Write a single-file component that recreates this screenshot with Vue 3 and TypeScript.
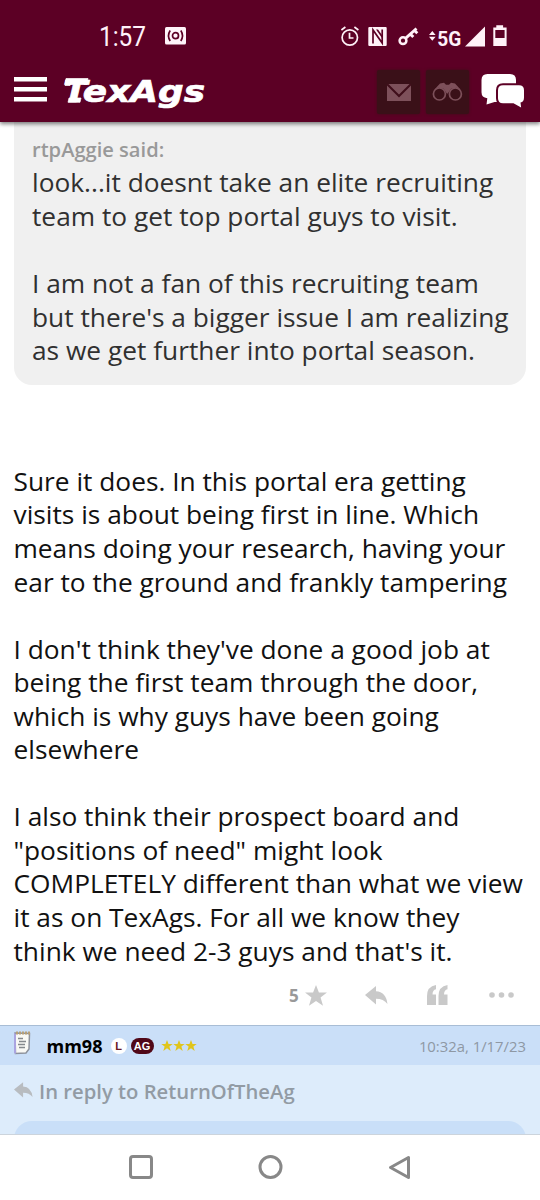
<script setup lang="ts">
const quoteLines: string[] = [
  'look...it doesnt take an elite recruiting',
  'team to get top portal guys to visit.',
  '',
  'I am not a fan of this recruiting team',
  "but there's a bigger issue I am realizing",
  'as we get further into portal season.',
]
const bodyLines: string[] = [
  'Sure it does. In this portal era getting',
  'visits is about being first in line. Which',
  'means doing your research, having your',
  'ear to the ground and frankly tampering',
  '',
  "I don't think they've done a good job at",
  'being the first team through the door,',
  'which is why guys have been going',
  'elsewhere',
  '',
  'I also think their prospect board and',
  '"positions of need" might look',
  'COMPLETELY different than what we view',
  'it as on TexAgs. For all we know they',
  "think we need 2-3 guys and that's it.",
]
const stars: number[] = [0, 1, 2]
</script>

<template>
  <div class="screen">
    <header class="top">
      <div class="status">
        <svg class="clock" width="50" height="36" viewBox="0 0 50 36"><text x="0" y="27.500" textLength="47" lengthAdjust="spacingAndGlyphs">1:57</text></svg>
        <svg class="cast" width="21" height="18" viewBox="0 0 21 18">
          <rect width="21" height="17.5" rx="1.5" fill="#fff4fa" />
          <g fill="none" stroke="#5c0025" stroke-width="1.7"><circle cx="10.5" cy="8.7" r="3" /><path d="M5.2 3.5Q1.8 8.7 5.2 14M15.8 3.5Q19.2 8.7 15.8 14" /></g>
        </svg>
        <svg class="sysicons" width="168" height="26" viewBox="340 24 168 26">
          <g fill="none" stroke="#fff1f8" stroke-width="1.7"><circle cx="349.8" cy="37.5" r="7.7" /><path d="M349.5 32.8v5.2h4M341.4 30l4-3M358.4 30l-4-3" /></g>
          <rect x="368.3" y="27" width="18.4" height="19" rx="1" fill="#fff1f8" />
          <path d="M373 43.500V30l9.200 13V29.500" fill="none" stroke="#5c0025" stroke-width="1.7" /><path d="M376 29.500h2l4 5.500v3z" fill="#5c0025" />
          <g fill="none" stroke="#fff1f8"><circle cx="403" cy="40.7" r="3.4" stroke-width="2.500" /><path d="M405.5 38.3L416.5 28.5M410.3 34l3 3M414.3 30.3l3 3" stroke-width="2.9" /></g>
          <path d="M429 35l3.300-4 3.300 4zM429 36.800l3.300 4 3.300-4z" fill="#fff1f8" />
          <text x="437.3" y="46" class="net" textLength="24" lengthAdjust="spacingAndGlyphs">5G</text>
          <path d="M465 46.500L485 26.500V46.500z" fill="#fff1f8" />
          <path d="M493.3 27.500h3V25.300h6.800v2.200h3.500V46h-13.300z" fill="#fff1f8" /><path d="M495.3 30h9.300v8h-9.300z" fill="#5c0025" />
        </svg>
      </div>
      <div class="brandbar">
        <svg class="menu" width="33" height="25" viewBox="0 0 33 25"><path d="M0 2.300h33M0 12.300h33M0 22.300h33" stroke="#fff" stroke-width="4.400" /></svg>
        <svg class="logo" width="145" height="36" viewBox="0 0 145 36"><text x="-1" y="26" textLength="142" lengthAdjust="spacingAndGlyphs">TexAgs</text><path d="M2 2.500h22l-1 6h-3l0-2H8l-2 3H1zM5 22h12l-1 4.300H4z" fill="#fff" /></svg>
        <div class="tool"><svg width="24" height="17" viewBox="0 0 24 17"><path d="M0 0h24v17H0z" fill="#7d505a" /><path d="M0 0L12 12L24 0" fill="none" stroke="#3f0e1a" stroke-width="2" /></svg></div>
        <div class="tool second"><svg width="31" height="20" viewBox="0 0 31 20"><g fill="none" stroke="#7d505a" stroke-width="1.700"><circle cx="7.400" cy="12" r="6" /><circle cx="23.400" cy="12" r="6" /></g><path d="M2.500 7.500L8 1.500l4-.7 2 2h3l2-2 4 .7 5.500 6-4-1.800-5.500 1-3.200 4.800h-1l-3.200-4.800-5.100-1z" fill="#7d505a" /></svg></div>
        <svg class="chat" width="43" height="36" viewBox="481 73 43 36">
          <path d="M487.500 74h22.500q6 0 6 6v17q0 5-6 5h-15.500L486.500 104.500l.8-6.300q-5.800-.7-5.800-6V80q0-6 6-6z" fill="#fff" />
          <path d="M503 85.200h16q5 0 5 5v7.300q0 4.500-3.500 4.900l.6 5.200-7.600-4.300H503q-5 0-5-5v-8.100q0-5 5-5z" fill="#fff" stroke="#5c0025" stroke-width="4" paint-order="stroke" />
        </svg>
      </div>
    </header>

    <main>
      <section class="quote">
        <div class="said">rtpAggie said:</div>
        <div v-for="(line, i) in quoteLines" :key="i" class="line">{{ line }}</div>
      </section>
      <article class="post">
        <div v-for="(line, i) in bodyLines" :key="i" class="line">{{ line }}</div>
      </article>
      <div class="actions">
        <span class="count">5</span>
        <svg class="star" width="22" height="21" viewBox="0 0 24 23"><path d="M12 0l3.200 8.300H24l-7 5.500 2.700 9L12 17.500 4.300 22.800l2.700-9L0 8.300h8.800z" /></svg>
        <svg class="reply" width="23" height="19" viewBox="0 0 23 19"><path d="M0 9L11 0v5.200q10 .6 11.500 12.800-4-5.300-11.500-5.300V18.500z" /></svg>
        <svg class="marks" width="21" height="20" viewBox="0 0 21 20"><path d="M9 0v4.300Q5.500 5 5.500 9.500H9V20H0V11Q0 1.500 9 0zM20.500 0v4.300Q17 5 17 9.500h3.500V20h-9V11q0-9.500 9-11z" /></svg>
        <svg class="dots" width="26" height="6" viewBox="0 0 26 6"><circle cx="3" cy="3" r="2.800" /><circle cx="12.500" cy="3" r="2.800" /><circle cx="22" cy="3" r="2.800" /></svg>
      </div>
    </main>

    <section class="next">
      <div class="author">
        <svg class="note" width="19" height="24" viewBox="0 0 19 24"><path d="M2 2l14.500.5L16 18l-3 4-10.500.5z" fill="#f9f9f5" stroke="#8d929c" stroke-width="1.500" /><path d="M1 2v20l2 1V3z" fill="#aaa4e0" /><path d="M3 2h14" stroke="#b7a078" stroke-width="3" stroke-dasharray="2 1" /><path d="M5 7.500h5M6 10.500h7M5 13.500h7M6 16.500h6" stroke="#85898d" stroke-width="1.300" /></svg>
        <strong>mm98</strong>
        <span class="badge letter">L</span><span class="badge ag">AG</span>
        <svg v-for="s in stars" :key="s" class="rating" width="12" height="11" viewBox="0 0 24 23"><path d="M12 0l3.200 8.300H24l-7 5.500 2.700 9L12 17.500 4.300 22.800l2.700-9L0 8.300h8.800z" /></svg>
        <time>10:32a, 1/17/23</time>
      </div>
      <div class="inreply">
        <svg width="19" height="16" viewBox="0 0 23 19"><path d="M0 9L11 0v5.200q10 .6 11.500 12.800-4-5.300-11.500-5.300V18.500z" fill="#b8bcc0" /></svg>
        <span>In reply to ReturnOfTheAg</span>
      </div>
      <div class="peek"></div>
    </section>

    <nav>
      <svg width="24" height="24" viewBox="0 0 24 24"><rect x="1.500" y="1.500" width="21" height="21" rx="2.500" /></svg>
      <svg width="25" height="24" viewBox="0 0 25 24"><circle cx="12.500" cy="12" r="10.500" /></svg>
      <svg width="23" height="25" viewBox="0 0 23 25"><path d="M20.500 2.500v20L2.500 12.500z" /></svg>
    </nav>
  </div>
</template>

<style>
body { margin: 0; background: #fff; }
</style>

<style scoped>
.screen { width: 540px; height: 1200px; display: flex; flex-direction: column; overflow: hidden; background: #fff; font-family: "Open Sans", sans-serif; }
svg { display: block; flex: none; }
.top { position: relative; z-index: 1; flex: none; height: 122px; background: #5c0025; box-shadow: 0 2px 4px rgba(0, 0, 0, .5); }
.status { height: 68px; display: flex; align-items: flex-start; box-sizing: border-box; padding-left: 99px; }
.clock { margin-top: 18px; font: 27.500px Roboto, sans-serif; fill: #fff1f8; overflow: visible; }
.cast { margin: 27px 0 0 16px; }
.sysicons { margin: 24px 0 0 154px; }
.net { font: bold 21px Roboto, sans-serif; fill: #fff1f8; }
.brandbar { display: flex; align-items: flex-start; padding-left: 14px; }
.menu { margin-top: 9px; }
.logo { margin: 8px 0 0 17px; font: italic bold 31px "DejaVu Sans", sans-serif; fill: #fff; stroke: #fff; stroke-width: .7; overflow: visible; }
.tool { display: flex; align-items: center; justify-content: center; width: 43px; height: 44px; margin: 2px 0 0 168px; background: #3a1018; border-radius: 2px; box-shadow: 0 0 3px #3a1018; }
.tool.second { margin-left: 6px; }
.chat { margin: 5px 0 0 11.500px; }
main { height: 903px; flex: none; }
.quote { box-sizing: border-box; height: 263px; margin: 0 14px; padding: 10px 18px; background: #f0f0f0; border-radius: 0 0 18px 18px; color: #303030; }
.said { height: 34.400px; line-height: 36.500px; font-size: 20.100px; font-weight: 600; color: #999; white-space: nowrap; }
.line { height: 33.550px; line-height: 33.550px; font-size: 26.300px; white-space: pre; }
.post { margin: 79.900px 0 0 13.500px; height: 503.250px; color: #111; }
.actions { display: flex; align-items: center; height: 54px; padding-left: 289px; fill: #c9c9c9; }
.count { width: 16px; font-size: 17px; font-weight: 700; color: #999; }
.star { margin-left: 0; }
.reply { margin-left: 38px; }
.marks { margin-left: 39px; }
.dots { margin-left: 41px; }
.next { flex: none; height: 110px; background: #ddecfb; overflow: hidden; border-bottom: 1px solid #ccd4dc; box-sizing: border-box; }
.author { display: flex; align-items: center; box-sizing: border-box; height: 40px; border-top: 1.500px solid #a8bdd5; background: #cadff8; padding: 0 14px 0 13px; }
.note { margin-top: -5px; }
strong { width: 64px; margin-left: 14.500px; font-size: 18px; line-height: 24px; }
.badge { display: flex; align-items: center; justify-content: center; height: 16px; border-radius: 9px; font: bold 11px "Liberation Sans", sans-serif; }
.letter { width: 16px; color: #6a1825; background: #fff; }
.ag { width: 23px; margin: 0 7px 0 4px; background: #500818; color: #fff; }
.rating { fill: #e0c51c; }
time { margin-left: auto; font-size: 14.850px; color: #8e98a4; }
.inreply { display: flex; align-items: center; height: 56px; padding-left: 14px; font-size: 20.250px; font-weight: 600; color: #929ba4; white-space: nowrap; }
.inreply svg { margin-top: -6px; }
.inreply span { margin: -4px 0 0 6px; }
.peek { height: 40px; margin: 0 14px; background: #c9dff8; border-radius: 18px 18px 0 0; }
nav { display: flex; align-items: center; height: 64px; padding-left: 129px; gap: 104.500px; fill: none; stroke: #888; stroke-width: 3; stroke-linejoin: round; }
nav svg:last-child { margin-left: 1px; }
</style>
